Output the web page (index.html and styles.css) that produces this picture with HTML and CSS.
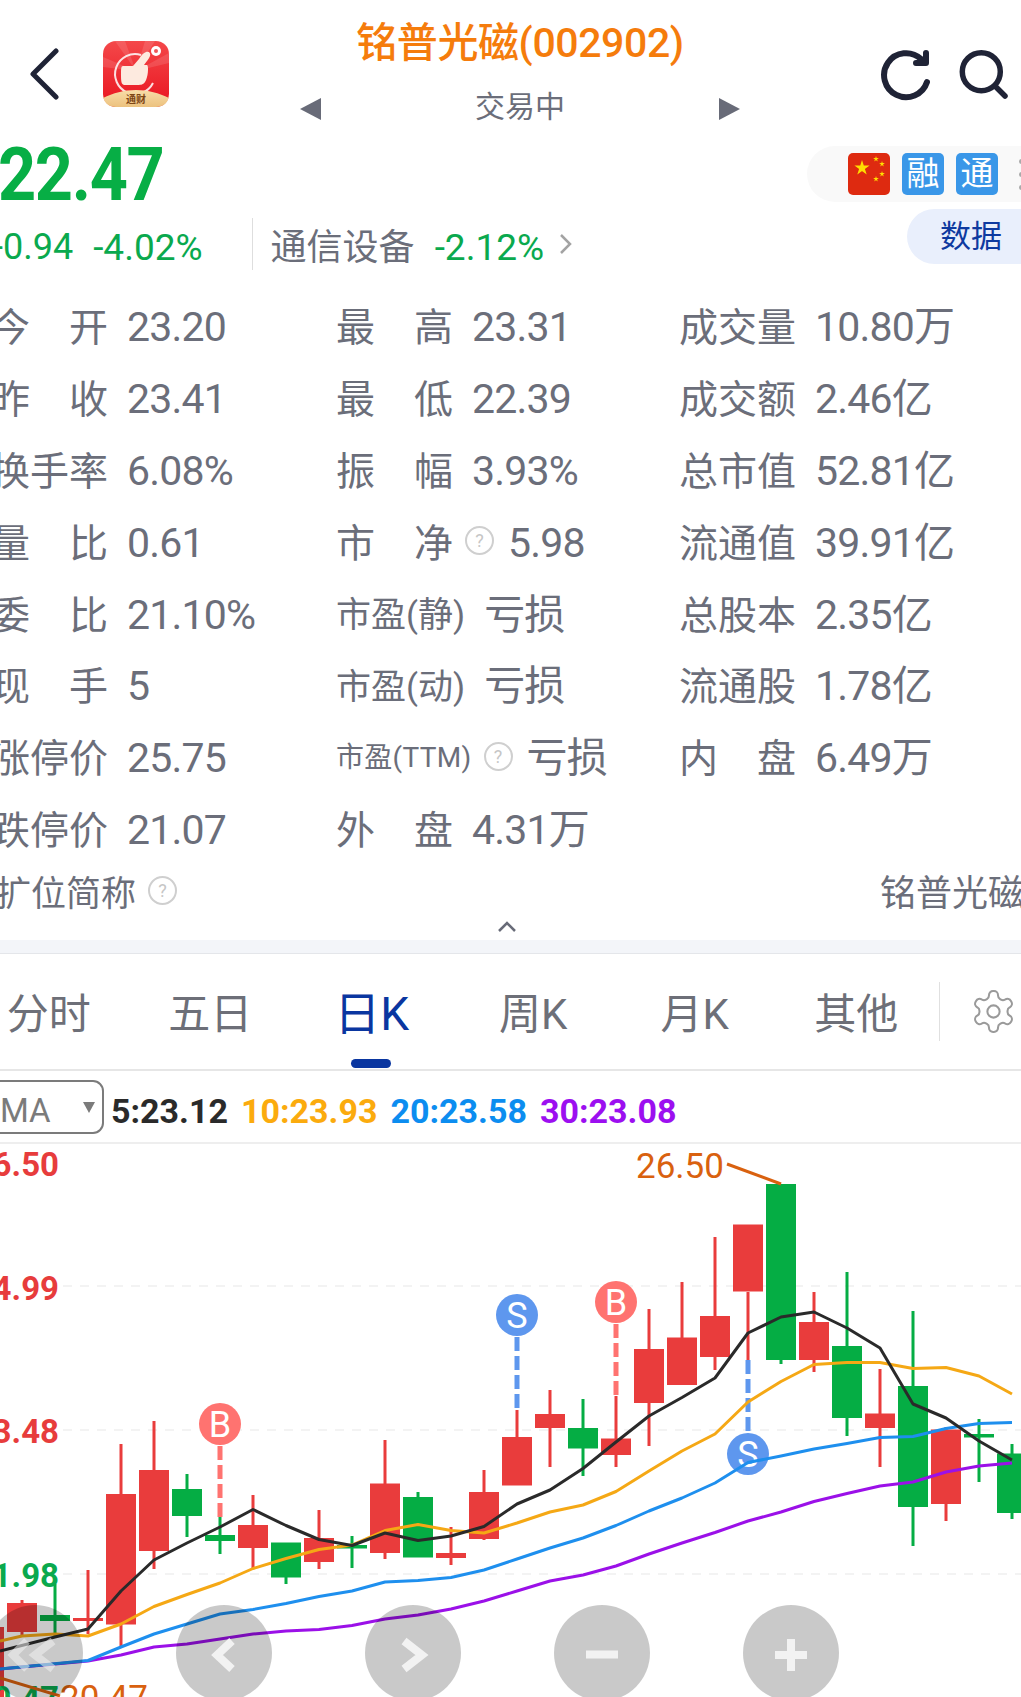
FILE: index.html
```html
<!DOCTYPE html>
<html lang="zh-CN">
<head>
    <meta charset="UTF-8">
    <title>铭普光磁(002902)</title>
    <link rel="stylesheet" href="styles.css">
</head>
<body>
    <div class="page">
        <div class="top-bar">
            <div class="top-left">
                <svg class="back-icon" width="30" height="52" viewBox="0 0 30 52"><path d="M26 3 3 26l23 23" fill="none" stroke="#1f2336" stroke-width="5" stroke-linecap="round" stroke-linejoin="round"/></svg>
                <svg class="app-logo" width="66" height="66" viewBox="0 0 66 66">
                    <defs>
                        <linearGradient id="logoRed" x1="0" y1="0" x2="0" y2="1"><stop offset="0" stop-color="#f4484a"/><stop offset="1" stop-color="#e9141f"/></linearGradient>
                        <linearGradient id="logoGold" x1="0" y1="0" x2="0" y2="1"><stop offset="0" stop-color="#f8dca8"/><stop offset="1" stop-color="#ecc27e"/></linearGradient>
                    </defs>
                    <rect width="66" height="66" rx="13" fill="url(#logoRed)"/>
                    <path d="M33 30 12 0h10zM33 30 42 0h10zM33 30 66 12v10zM33 30 0 16v10z" fill="#fff" opacity=".12"/>
                    <path d="M38 14A20 20 0 1 0 50 42" fill="none" stroke="#fff" stroke-width="2" opacity=".85"/>
                    <path d="M20 25h10l6-7c2-3 3-5 7-7 3-1 5 1 4 4s-4 6-6 9h3c2 1 1 13-2 17-2 3-5 3-9 3H22c-3 0-4-2-4-9s0-10 2-10z" fill="#fdeadf"/>
                    <circle cx="53" cy="10" r="5" fill="#fff"/>
                    <circle cx="53" cy="10" r="2" fill="#f0585a"/>
                    <path d="M0 57c10-5 21-8 33-8s23 3 33 8v-4 0c0 8-5 13-13 13H13C5 66 0 61 0 53z" fill="url(#logoGold)"/>
                    <text class="logo-text" x="33" y="62" text-anchor="middle">通财</text>
                </svg>
            </div>
            <div class="top-center">
                <div class="stock-title">铭普光磁(002902)</div>
                <div class="status-row">
                    <span class="arrow-left"></span>
                    <span class="status-text">交易中</span>
                    <span class="arrow-right"></span>
                </div>
            </div>
            <div class="top-right">
                <svg width="54" height="56" viewBox="0 0 54 56"><path d="M48 36A22 22 0 1 1 42 13M47 7v10H37" fill="none" stroke="#1f2336" stroke-width="6" stroke-linecap="round" stroke-linejoin="round"/></svg>
                <svg class="search-icon" width="54" height="56" viewBox="0 0 54 56"><circle cx="25.300" cy="25.700" r="19" fill="none" stroke="#1f2336" stroke-width="5.500"/><path d="m40 41 9 9" fill="none" stroke="#1f2336" stroke-width="5.500" stroke-linecap="round"/></svg>
            </div>
        </div>

        <div class="quote">
            <div class="quote-left">
                <div class="price">22.47</div>
                <div class="change-row">
                    <span class="green change-first">-0.94</span>
                    <span class="green change-second">-4.02%</span>
                    <span class="change-divider"></span>
                    <span class="industry">通信设备</span>
                    <span class="green industry-change">-2.12%</span>
                    <svg class="industry-chevron" width="14" height="22" viewBox="0 0 14 22"><path d="m2 2 9 9-9 9" fill="none" stroke="#a3a3a3" stroke-width="2.5"/></svg>
                </div>
            </div>
            <div class="quote-right">
                <div class="tag-pill">
                    <svg class="tag" width="42" height="42" viewBox="0 0 42 42">
                        <defs><polygon id="star" points="0,-1 .588,.809 -.951,-.309 .951,-.309 -.588,.809"/></defs>
                        <rect width="42" height="42" rx="5" fill="#de2a10"/>
                        <use href="#star" fill="#ffde00" transform="translate(14 15) scale(8)"/>
                        <use href="#star" fill="#ffde00" transform="translate(28 6) scale(3)"/>
                        <use href="#star" fill="#ffde00" transform="translate(34 11) scale(3)"/>
                        <use href="#star" fill="#ffde00" transform="translate(34 21) scale(3)"/>
                        <use href="#star" fill="#ffde00" transform="translate(28 26) scale(3)"/>
                    </svg>
                    <span class="tag tag-blue">融</span>
                    <span class="tag tag-blue">通</span>
                    <span class="tag-more"><i></i><i></i><i></i></span>
                </div>
                <div class="data-btn">数据</div>
            </div>
        </div>

        <div class="stats">
            <div class="stat"><span class="stat-label">今开</span><span>23.20</span></div>
            <div class="stat"><span class="stat-label">最高</span><span>23.31</span></div>
            <div class="stat"><span class="stat-label">成交量</span><span>10.80万</span></div>

            <div class="stat"><span class="stat-label">昨收</span><span>23.41</span></div>
            <div class="stat"><span class="stat-label">最低</span><span>22.39</span></div>
            <div class="stat"><span class="stat-label">成交额</span><span>2.46亿</span></div>

            <div class="stat"><span class="stat-label">换手率</span><span>6.08%</span></div>
            <div class="stat"><span class="stat-label">振幅</span><span>3.93%</span></div>
            <div class="stat"><span class="stat-label">总市值</span><span>52.81亿</span></div>

            <div class="stat"><span class="stat-label">量比</span><span>0.61</span></div>
            <div class="stat"><span class="stat-label">市净</span><span class="help">?</span><span>5.98</span></div>
            <div class="stat"><span class="stat-label">流通值</span><span>39.91亿</span></div>

            <div class="stat"><span class="stat-label">委比</span><span>21.10%</span></div>
            <div class="stat"><span class="label-small">市盈(静)</span><span>亏损</span></div>
            <div class="stat"><span class="stat-label">总股本</span><span>2.35亿</span></div>

            <div class="stat"><span class="stat-label">现手</span><span>5</span></div>
            <div class="stat"><span class="label-small">市盈(动)</span><span>亏损</span></div>
            <div class="stat"><span class="stat-label">流通股</span><span>1.78亿</span></div>

            <div class="stat"><span class="stat-label">涨停价</span><span>25.75</span></div>
            <div class="stat"><span class="label-tiny">市盈(TTM)</span><span class="help">?</span><span>亏损</span></div>
            <div class="stat"><span class="stat-label">内盘</span><span>6.49万</span></div>

            <div class="stat"><span class="stat-label">跌停价</span><span>21.07</span></div>
            <div class="stat"><span class="stat-label">外盘</span><span>4.31万</span></div>
            <div class="stat"></div>
        </div>

        <div class="name-row">
            <div class="name-left"><span>扩位简称</span><span class="help">?</span></div>
            <span>铭普光磁</span>
        </div>
        <div class="collapse-row">
            <svg width="20" height="12" viewBox="0 0 20 12"><path d="m2 10 8-8 8 8" fill="none" stroke="#686b78" stroke-width="2.5"/></svg>
        </div>
        <div class="band"></div>

        <div class="tabs">
            <div class="tab">分时</div>
            <div class="tab">五日</div>
            <div class="tab active">日K</div>
            <div class="tab">周K</div>
            <div class="tab">月K</div>
            <div class="tab">其他</div>
            <div class="tab-divider"></div>
            <svg class="gear" width="49" height="49" viewBox="0 0 24 24" fill="none" stroke="#9a9a9a" stroke-width="1">
                <path d="M12.22 2h-.44a2 2 0 0 0-2 2v.18a2 2 0 0 1-1 1.73l-.43.25a2 2 0 0 1-2 0l-.15-.08a2 2 0 0 0-2.73.73l-.22.38a2 2 0 0 0 .73 2.73l.15.1a2 2 0 0 1 1 1.72v.51a2 2 0 0 1-1 1.74l-.15.09a2 2 0 0 0-.73 2.73l.22.38a2 2 0 0 0 2.73.73l.15-.08a2 2 0 0 1 2 0l.43.25a2 2 0 0 1 1 1.73V20a2 2 0 0 0 2 2h.44a2 2 0 0 0 2-2v-.18a2 2 0 0 1 1-1.73l.43-.25a2 2 0 0 1 2 0l.15.08a2 2 0 0 0 2.73-.73l.22-.39a2 2 0 0 0-.73-2.73l-.15-.08a2 2 0 0 1-1-1.74v-.5a2 2 0 0 1 1-1.74l.15-.09a2 2 0 0 0 .73-2.73l-.22-.38a2 2 0 0 0-2.73-.73l-.15.08a2 2 0 0 1-2 0l-.43-.25a2 2 0 0 1-1-1.73V4a2 2 0 0 0-2-2z"/>
                <circle cx="12" cy="12" r="3"/>
            </svg>
        </div>

        <div class="ma-row">
            <div class="ma-select"><span>MA</span><i class="ma-caret"></i></div>
            <span class="ma-value ma5">5:23.12</span>
            <span class="ma-value ma10">10:23.93</span>
            <span class="ma-value ma20">20:23.58</span>
            <span class="ma-value ma30">30:23.08</span>
        </div>

        <div class="chart">
            <!-- viewBox keeps page y values so the numbers read off the chart directly -->
            <svg class="chart-svg" width="1021" height="553" viewBox="0 1144 1021 553">
                <g class="grid">
                    <path d="M63 1286H1021M63 1430H1021M63 1574H1021"/>
                </g>

                <path class="wick red-line" d="M-11 1600V1697M22 1600V1636M88 1570V1634M121 1444V1647M154 1421V1569M253 1495V1568M319 1510V1569M385 1440V1559M451 1527V1565M484 1470V1540M517 1410V1440M550 1390V1467M616 1396V1467M649 1309V1446M682 1282V1385M715 1237V1370M748 1292V1360M814 1292V1372M880 1369V1467M946 1427V1521"/>
                <path class="red-body" d="M-26 1627h30v70h-30zM7 1603h30v29H7zM73 1618h30v3H73zM106 1494h30v130.500H106zM139 1470h30v81h-30zM238 1525h30v23h-30zM304 1538h30v24h-30zM370 1483.500h30v69.500h-30zM436 1553h30v5h-30zM469 1492h30v47h-30zM502 1437h30v48.500h-30zM535 1414h30v14h-30zM601 1438.500h30v16.500h-30zM634 1349h30v54h-30zM667 1337.500h30v47.500h-30zM700 1316h30v41h-30zM733 1224.500h30v67h-30zM799 1322h30v38h-30zM865 1413.500h30v14.500h-30zM931 1429.500h30v74.500h-30z"/>
                <path class="wick green-line" d="M55 1584V1637M187 1474V1537M220 1517V1554M286 1577V1584M352 1536V1568M418 1492V1500M583 1399V1476M781 1355V1364M847 1272V1436M913 1311V1546M979 1419V1482M1012 1444V1519"/>
                <path class="green-body" d="M40 1615h30v6H40zM172 1489h30v27h-30zM205 1535h30v6h-30zM271 1542.500h30v35h-30zM337 1545h30v3.500h-30zM403 1497h30v60.500h-30zM568 1428h30v20.500h-30zM766 1184h30v176h-30zM832 1346h30v72h-30zM898 1386h30v121h-30zM964 1434h30v3.500h-30zM997 1453.500h30v59.500h-30z"/>

                <g class="signal-buy">
                    <path class="signal-dash" d="M220 1446V1518M616 1324V1397"/>
                    <circle cx="220" cy="1424" r="21"/>
                    <circle cx="616" cy="1302" r="21"/>
                    <text class="signal-text" x="220" y="1437" text-anchor="middle">B</text>
                    <text class="signal-text" x="616" y="1315" text-anchor="middle">B</text>
                </g>
                <g class="signal-sell">
                    <path class="signal-dash" d="M517 1337V1410M748 1360V1433"/>
                    <circle cx="517" cy="1315" r="21"/>
                    <circle cx="748" cy="1454" r="21"/>
                    <text class="signal-text" x="517" y="1328" text-anchor="middle">S</text>
                    <text class="signal-text" x="748" y="1467" text-anchor="middle">S</text>
                </g>

                <polyline class="ma-line line-ma30" points="0,1669 22,1667 55,1664 88,1661 121,1655 154,1647 187,1644 220,1639 253,1634 286,1631 319,1629.500 352,1625.500 385,1619 418,1615 451,1609 484,1601 517,1591 550,1581 583,1575 616,1566 649,1554 682,1543 715,1532.500 748,1521 781,1512 814,1501.500 847,1493.500 880,1486 913,1482 946,1472 979,1466 1012,1463"/>
                <polyline class="ma-line line-ma20" points="0,1669 88,1660.500 121,1647 154,1634 187,1624 220,1614 253,1609.500 286,1603.500 319,1596.500 352,1591 385,1582 418,1580.500 451,1577.500 484,1570 517,1559 550,1548 583,1538 616,1525.500 649,1511 682,1498 715,1483 748,1462.500 781,1456 814,1449 847,1443.500 880,1437.500 913,1436.500 946,1428.500 979,1423.500 1012,1422.500"/>
                <polyline class="ma-line line-ma10" points="0,1641 22,1636 55,1634 88,1636 121,1624 154,1606.500 187,1594.500 220,1583 253,1568.500 286,1558.500 319,1549.500 352,1545 385,1530.500 418,1524.500 451,1530.500 484,1533 517,1523 550,1512 583,1505 616,1491.500 649,1471 682,1451 715,1434 748,1402 781,1381.500 814,1364.500 847,1362.500 880,1362.500 913,1368.500 946,1367.500 979,1376 1012,1394"/>
                <polyline class="ma-line line-ma5" points="0,1651 55,1637 88,1629 121,1591 154,1560 187,1543 220,1527 253,1509.500 286,1525.500 319,1539.500 352,1545.500 385,1533 418,1540.500 451,1536 484,1526.500 517,1504 550,1490 583,1468.500 616,1442 649,1416 682,1397.500 715,1378 748,1333 781,1317 814,1312 847,1328 880,1348 913,1404 946,1418 979,1441 1012,1460"/>

                <text class="axis axis-red" x="59" y="1176" text-anchor="end">26.50</text>
                <text class="axis axis-red" x="59" y="1300" text-anchor="end">24.99</text>
                <text class="axis axis-red" x="59" y="1443" text-anchor="end">23.48</text>
                <text class="axis axis-green" x="59" y="1587" text-anchor="end">21.98</text>
                <text class="axis axis-green" x="59" y="1710" text-anchor="end">20.47</text>

                <text class="peak" x="636" y="1178">26.50</text>
                <path class="peak-line" d="M727 1164 781 1184"/>
                <text class="peak" x="60" y="1710">20.47</text>
                <path class="peak-line" d="M0 1678 60 1696"/>
            </svg>

            <div class="zoom-bar">
                <div class="zoom-btn"><svg class="zoom-faint" width="96" height="96" viewBox="0 0 96 96"><path class="zoom-icon" d="M40 36 26 50l14 14M66 36 48 50l18 14"/></svg></div>
                <div class="zoom-btn"><svg width="96" height="96" viewBox="0 0 96 96"><path class="zoom-icon" d="M56 36 41 50l15 14"/></svg></div>
                <div class="zoom-btn"><svg width="96" height="96" viewBox="0 0 96 96"><path class="zoom-icon" d="M39 36 57 50 39 64"/></svg></div>
                <div class="zoom-btn"><svg width="96" height="96" viewBox="0 0 96 96"><path class="zoom-icon" d="M32 49.500H64"/></svg></div>
                <div class="zoom-btn"><svg width="96" height="96" viewBox="0 0 96 96"><path class="zoom-icon" d="M32 50H64M48 34V66"/></svg></div>
            </div>
        </div>
    </div>
</body>
</html>
```

FILE: styles.css
```css
* {
    box-sizing: border-box;
}
html, body {
    margin: 0;
    padding: 0;
    background-color: #fff;
}
body {
    font-family: Roboto, "Noto Sans CJK SC", sans-serif;
    color: #6b6e7a;
}
.page {
    width: 1021px;
    height: 1697px;
    overflow: hidden;
}
.green {
    color: #0aa94e;
}

/* top bar */
.top-bar {
    display: flex;
    height: 130px;
}
.top-left {
    width: 300px;
    display: flex;
    align-items: flex-start;
    padding-top: 41px;
    padding-left: 30px;
}
.back-icon {
    margin-top: 7px;
}
.app-logo {
    margin-left: 43px;
}
.logo-text {
    font-size: 10px;
    font-weight: 700;
    fill: #7d4514;
}
.top-center {
    width: 440px;
    display: flex;
    flex-direction: column;
    align-items: center;
    padding-top: 17px;
}
.stock-title {
    font-size: 41px;
    font-weight: 500;
    letter-spacing: -0.4px;
    line-height: 52px;
    color: #f57c0c;
    white-space: nowrap;
}
.status-row {
    width: 100%;
    display: flex;
    justify-content: space-between;
    align-items: center;
    margin-top: 22px;
}
.status-text {
    font-size: 30px;
    line-height: 38px;
    margin-top: -3px;
}
.arrow-left {
    border-top: 11px solid transparent;
    border-bottom: 11px solid transparent;
    border-right: 21px solid #686b78;
}
.arrow-right {
    border-top: 11px solid transparent;
    border-bottom: 11px solid transparent;
    border-left: 21px solid #686b78;
}
.top-right {
    display: flex;
    align-items: flex-start;
    padding-top: 46px;
    padding-left: 139px;
}
.search-icon {
    margin-left: 23px;
}

/* price block */
.quote {
    display: flex;
    justify-content: space-between;
    height: 161px;
}
.price {
    height: 80px;
    line-height: 80px;
    margin-top: 5px;
    margin-left: -2px;
    margin-bottom: -1px;
    font-size: 74px;
    font-weight: 700;
    letter-spacing: -1.5px;
    color: #07ae45;
    transform: scaleX(0.9);
    transform-origin: left center;
}
.change-row {
    display: flex;
    align-items: center;
    height: 52px;
    margin-top: 4px;
    margin-left: -7px;
    font-size: 37px;
    white-space: nowrap;
}
.change-row .green {
    margin-top: 6px;
}
.change-row .change-first {
    font-size: 36px;
}
.change-row .change-second {
    margin-left: 20px;
}
.change-divider {
    width: 1px;
    height: 52px;
    margin-left: 49px;
    background-color: #dedede;
}
.industry {
    margin-left: 18px;
    font-size: 36px;
}
.change-row .industry-change {
    margin-left: 20px;
}
.industry-chevron {
    margin-left: 15px;
}
.quote-right {
    width: 214px;
    display: flex;
    flex-direction: column;
    align-items: flex-end;
}
.tag-pill {
    width: 214px;
    height: 56px;
    margin-top: 16px;
    padding-left: 41px;
    display: flex;
    align-items: center;
    gap: 12px;
    border-radius: 28px 0 0 28px;
    background-color: #f9f9f9;
}
.tag {
    flex: none;
    width: 42px;
    height: 42px;
}
.tag-blue {
    display: flex;
    align-items: center;
    justify-content: center;
    border-radius: 5px;
    background-color: #3a97e8;
    color: #fff;
    font-size: 33px;
    line-height: 42px;
}
.tag-more {
    display: flex;
    flex-direction: column;
    gap: 8px;
    margin-left: 9px;
}
.tag-more i {
    display: block;
    width: 5px;
    height: 5px;
    border-radius: 50%;
    background-color: #aaa;
}
.data-btn {
    width: 114px;
    height: 55px;
    margin-top: 7px;
    padding-left: 33px;
    border-radius: 28px 0 0 28px;
    background-color: #e9effc;
    color: #0e3aa0;
    font-size: 31px;
    line-height: 55px;
    white-space: nowrap;
}

/* stats table */
.stats {
    display: grid;
    grid-template-columns: 345px 343px 1fr;
    grid-auto-rows: 71.9px;
    margin-left: -9px;
    font-size: 39px;
}
.stat {
    display: flex;
    align-items: center;
    gap: 19px;
    white-space: nowrap;
}
.stat > span:last-child {
    font-size: 41px;
    line-height: 48px;
    letter-spacing: -0.8px;
}
.stat-label {
    width: 117px;
    margin-top: -6px;
    text-align: justify;
    text-align-last: justify;
}
.label-small {
    margin-top: -6px;
    font-size: 35px;
}
.label-tiny {
    margin-top: -6px;
    font-size: 28px;
    letter-spacing: 0.3px;
}
.help {
    flex: none;
    width: 29px;
    height: 29px;
    margin: -4px -5px 0 -7px;
    border: 2px solid #cfcfcf;
    border-radius: 50%;
    color: #c6c6c6;
    font-size: 18px;
    line-height: 25px;
    text-align: center;
}
.name-row {
    display: flex;
    justify-content: space-between;
    align-items: center;
    height: 48px;
    margin-left: -4px;
    margin-right: -3px;
    font-size: 36px;
    white-space: nowrap;
}
.name-left {
    display: flex;
    align-items: center;
    gap: 12px;
    font-size: 35px;
}
.name-left .help {
    margin: 0;
}
.collapse-row {
    display: flex;
    justify-content: center;
    align-items: center;
    height: 26px;
    padding-right: 8px;
}
.band {
    height: 14px;
    background-color: #f3f5f9;
    border-bottom: 1px solid #e4e6ea;
}

/* period tabs */
.tabs {
    display: flex;
    align-items: center;
    height: 117px;
    margin-left: -32px;
    border-bottom: 2px solid #e6e6e6;
}
.tab {
    position: relative;
    flex: none;
    width: 161.500px;
    height: 100%;
    padding-top: 4px;
    font-size: 42px;
    line-height: 113px;
    text-align: center;
    color: #6d6f78;
}
.tab.active {
    color: #0a36a0;
    font-size: 46px;
}
.tab.active::after {
    content: "";
    position: absolute;
    left: 60px;
    bottom: 1px;
    width: 40px;
    height: 9px;
    border-radius: 5px;
    background-color: #0a36a0;
}
.tab-divider {
    flex: none;
    width: 1px;
    height: 59px;
    margin-left: 2px;
    background-color: #e0e0e0;
}
.gear {
    flex: none;
    margin-left: 29px;
}

/* MA legend */
.ma-row {
    display: flex;
    align-items: center;
    gap: 13px;
    height: 73px;
    border-bottom: 2px solid #eeeeee;
    font-size: 34px;
    font-weight: 700;
    white-space: nowrap;
}
.ma-select {
    display: flex;
    align-items: center;
    justify-content: space-between;
    width: 106px;
    height: 54px;
    margin-top: 1px;
    margin-left: -2px;
    margin-right: -6px;
    padding: 0 7px 0 0;
    border: 2px solid #7b7b7b;
    border-radius: 0 11px 11px 0;
    color: #7b7b7b;
    font-size: 33px;
    font-weight: 400;
}
.ma-select span {
    margin-top: 6px;
}
.ma-caret {
    border-left: 6px solid transparent;
    border-right: 6px solid transparent;
    border-top: 11px solid #7b7b7b;
}
.ma-value {
    margin-top: 8px;
}
.ma5 { color: #2a2a2a; }
.ma10 { color: #fbab0e; }
.ma20 { color: #0c8df0; }
.ma30 { color: #9c0ff0; }

/* kline chart */
.chart {
    position: relative;
    height: 553px;
    overflow: hidden;
}
.chart-svg {
    display: block;
}
.grid path {
    fill: none;
    stroke: #f0f0f0;
    stroke-width: 1.5;
    stroke-dasharray: 9 8;
}
.wick {
    fill: none;
    stroke-width: 3;
}
.red-line { stroke: #e93c3c; }
.green-line { stroke: #05ad44; }
.red-body { fill: #e93c3c; }
.green-body { fill: #05ad44; }
.signal-buy circle { fill: #ff7370; }
.signal-sell circle { fill: #5e97ee; }
.signal-dash {
    fill: none;
    stroke-width: 5;
    stroke-dasharray: 14 5;
}
.signal-buy .signal-dash { stroke: #ff7370; }
.signal-sell .signal-dash { stroke: #5e97ee; }
.signal-text {
    font-size: 36px;
    fill: #fff;
}
.ma-line {
    fill: none;
    stroke-width: 3;
    stroke-linejoin: round;
}
.line-ma5 { stroke: #2a2a2a; }
.line-ma10 { stroke: #f5a815; }
.line-ma20 { stroke: #1e8fee; }
.line-ma30 { stroke: #9b10e8; }
.axis {
    font-size: 33px;
    font-weight: 700;
}
.axis-red { fill: #e73c3c; }
.axis-green { fill: #0aa94e; }
.peak {
    font-size: 35px;
    fill: #d9610f;
}
.peak-line {
    fill: none;
    stroke: #d9610f;
    stroke-width: 3;
}

/* zoom and pan buttons over the chart */
.zoom-bar {
    position: absolute;
    left: -13px;
    top: 461px;
    display: flex;
    gap: 93px;
}
.zoom-btn {
    flex: none;
    width: 96px;
    height: 96px;
    border-radius: 50%;
    background-color: rgba(0, 0, 0, 0.21);
}
.zoom-btn svg {
    display: block;
}
.zoom-faint {
    opacity: 0.55;
}
.zoom-icon {
    fill: none;
    stroke: #f2f2f2;
    stroke-width: 8;
}
```
